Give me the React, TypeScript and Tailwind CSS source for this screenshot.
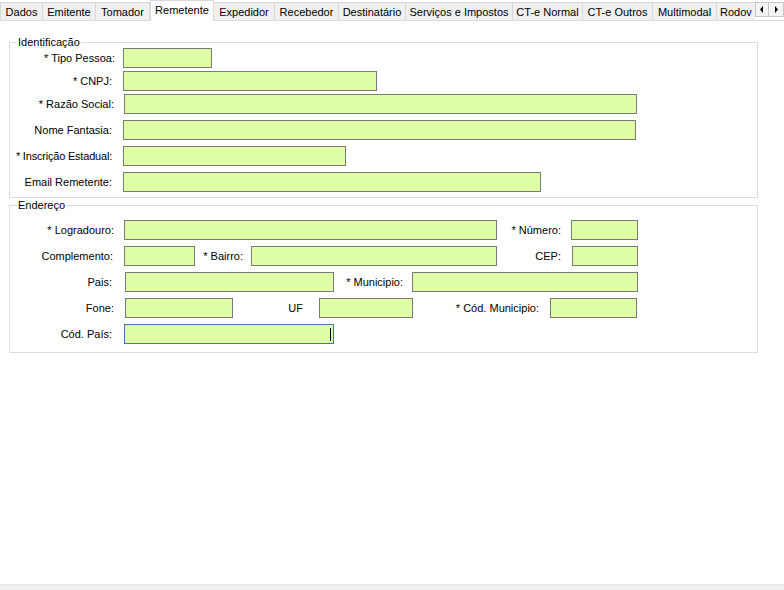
import React from "react";

const abas = [
  { nome: "Dados", w: "w-[43px]" },
  { nome: "Emitente", w: "w-[53px]" },
  { nome: "Tomador", w: "w-[54px]" },
  { nome: "Remetente", w: "w-[64px]", ativa: true },
  { nome: "Expedidor", w: "w-[61px]" },
  { nome: "Recebedor", w: "w-[64px]" },
  { nome: "Destinatário", w: "w-[67px]" },
  { nome: "Serviços e Impostos", w: "w-[107px]" },
  { nome: "CT-e Normal", w: "w-[70px]" },
  { nome: "CT-e Outros", w: "w-[70px]" },
  { nome: "Multimodal", w: "w-[64px]" },
];

// caixa de texto no estilo WinForms
function Caixa({ className, foco }: { className: string; foco?: boolean }) {
  return (
    <div
      className={
        "h-[20px] shrink-0 bg-[#dffda5] border flex items-center justify-end " +
        (foco ? "border-[#3d7bad] " : "border-[#7a7a7a] ") +
        className
      }
    >
      {foco && <span className="w-px h-[13px] bg-black mr-[2px]" />}
    </div>
  );
}

function Rotulo({ className, children }: { className: string; children: React.ReactNode }) {
  return <span className={"shrink-0 text-right whitespace-nowrap " + className}>{children}</span>;
}

export default function App() {
  return (
    <div className="w-[784px] h-[590px] bg-white flex flex-col text-[11px] leading-[13px] text-black font-['Liberation_Sans',Arial,sans-serif]">
      {/* Abas */}
      <div className="flex items-end h-[20px] shrink-0">
        {abas.map((a, i) =>
          a.ativa ? (
            <div
              key={a.nome}
              className={`${a.w} h-[21px] -mb-px relative z-10 bg-white border border-b-0 border-[#d9d9d9] flex justify-center pt-[3px]`}
            >
              {a.nome}
            </div>
          ) : (
            <div
              key={a.nome}
              className={`${a.w} h-[18px] bg-[#f0f0f0] border-t border-r border-[#d9d9d9] ${i === 0 ? "border-l" : ""} flex justify-center pt-[3px]`}
            >
              {a.nome}
            </div>
          )
        )}
        <div className="w-[38px] h-[18px] bg-[#f0f0f0] border-t border-[#d9d9d9] whitespace-nowrap pl-[3px] pt-[3px]">
          Rodov
        </div>
        <div className="self-start mt-[2px] flex">
          <div className="w-[14px] h-[15px] bg-[#f4f4f4] border border-[#c8c8c8] flex items-center justify-center">
            <svg width="4" height="7" viewBox="0 0 4 7">
              <path d="M3 0 L3 7 L0 3.5 Z" fill="#000" />
            </svg>
          </div>
          <div className="w-[15px] h-[15px] bg-[#f4f4f4] border border-l-0 border-[#c8c8c8] flex items-center justify-center">
            <svg width="4" height="7" viewBox="0 0 4 7">
              <path d="M1 0 L1 7 L4 3.5 Z" fill="#000" />
            </svg>
          </div>
        </div>
      </div>

      {/* Painel */}
      <div className="flex-1 border-t border-[#d9d9d9] flex flex-col">
        <fieldset className="ml-[9px] mt-[15px] w-[749px] border border-[#dcdcdc] pb-[5px]">
          <legend className="ml-[7px] px-px leading-[12px]">Identificação</legend>
          <div className="flex flex-col">
            <div className="flex items-center h-[20px]">
              <Rotulo className="w-[105px]">* Tipo Pessoa:</Rotulo>
              <Caixa className="ml-[8px] w-[89px]" />
            </div>
            <div className="flex items-center h-[20px] mt-[3px]">
              <Rotulo className="w-[102px]">* CNPJ:</Rotulo>
              <Caixa className="ml-[11px] w-[254px]" />
            </div>
            <div className="flex items-center h-[20px] mt-[3px]">
              <Rotulo className="w-[104px]">* Razão Social:</Rotulo>
              <Caixa className="ml-[10px] w-[513px]" />
            </div>
            <div className="flex items-center h-[20px] mt-[6px]">
              <Rotulo className="w-[102px]">Nome Fantasia:</Rotulo>
              <Caixa className="ml-[11px] w-[513px]" />
            </div>
            <div className="flex items-center h-[20px] mt-[6px]">
              <Rotulo className="w-[102px] tracking-[-0.2px]">* Inscrição Estadual:</Rotulo>
              <Caixa className="ml-[11px] w-[223px]" />
            </div>
            <div className="flex items-center h-[20px] mt-[6px]">
              <Rotulo className="w-[102px]">Email Remetente:</Rotulo>
              <Caixa className="ml-[11px] w-[418px]" />
            </div>
          </div>
        </fieldset>

        <fieldset className="ml-[9px] mt-px w-[749px] border border-[#dcdcdc] pb-[8px]">
          <legend className="ml-[7px] px-px leading-[12px]">Endereço</legend>
          <div className="flex flex-col pt-[9px]">
            <div className="flex items-center h-[20px]">
              <Rotulo className="w-[104px]">* Logradouro:</Rotulo>
              <Caixa className="ml-[10px] w-[373px]" />
              <Rotulo className="w-[64px]">* Número:</Rotulo>
              <Caixa className="ml-[10px] w-[67px]" />
            </div>
            <div className="flex items-center h-[20px] mt-[6px]">
              <Rotulo className="w-[103px]">Complemento:</Rotulo>
              <Caixa className="ml-[11px] w-[71px]" />
              <Rotulo className="w-[48px]">* Bairro:</Rotulo>
              <Caixa className="ml-[8px] w-[246px]" />
              <Rotulo className="w-[64px]">CEP:</Rotulo>
              <Caixa className="ml-[11px] w-[66px]" />
            </div>
            <div className="flex items-center h-[20px] mt-[6px]">
              <Rotulo className="w-[102px]">Pais:</Rotulo>
              <Caixa className="ml-[13px] w-[209px]" />
              <Rotulo className="w-[69px]">* Municipio:</Rotulo>
              <Caixa className="ml-[9px] w-[226px]" />
            </div>
            <div className="flex items-center h-[20px] mt-[6px]">
              <Rotulo className="w-[104px]">Fone:</Rotulo>
              <Caixa className="ml-[11px] w-[108px]" />
              <Rotulo className="w-[70px]">UF</Rotulo>
              <Caixa className="ml-[16px] w-[94px]" />
              <Rotulo className="w-[126px]">* Cód. Municipio:</Rotulo>
              <Caixa className="ml-[11px] w-[87px]" />
            </div>
            <div className="flex items-center h-[20px] mt-[6px]">
              <Rotulo className="w-[102px]">Cód. País:</Rotulo>
              <Caixa className="ml-[12px] w-[210px]" foco />
            </div>
          </div>
        </fieldset>
      </div>

      <div className="h-[6px] shrink-0 bg-[#f0f0f0] border-t border-[#e6e6e6]" />
    </div>
  );
}
